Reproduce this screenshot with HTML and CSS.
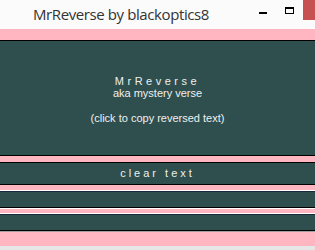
FILE: index.html
```html
<!doctype html>
<html lang="en">
<head>
<meta charset="UTF-8">
<title>MrReverse by blackoptics8</title>
<link rel="stylesheet" href="styles.css">
</head>
<body>
<div class="win">
	<div class="titlebar">
		<span class="title">MrReverse by blackoptics8</span>
		<span class="min"></span>
		<span class="max"></span>
		<span class="close"></span>
	</div>
	<div class="form">
		<div class="btn big">
			<div class="name">MrReverse</div>
			<div>aka mystery verse</div>
			<div class="blank"></div>
			<div>(click to copy reversed text)</div>
		</div>
		<div class="btn clear">clear text</div>
		<div class="field"></div>
		<div class="field last"></div>
	</div>
</div>
</body>
</html>
```
FILE: styles.css
```css
*{ margin:0px; padding:0px;}
body{
	width:315px;
	height:250px;
	overflow:hidden;
	background-color:#e6e6e6;
	font-family:"Liberation Sans", Arial, sans-serif;
}
.win{
	height:246px;
	display:flex;
	flex-direction:column;
	background-color:#ffb6c1;
}
.titlebar{
	position:relative;
	height:29px;
	background-color:#fbfbfb;
}
.title{
	position:absolute;
	left:33px;
	top:4px;
	font-family:"Open Sans", "Noto Sans", sans-serif;
	font-size:15px;
	line-height:20px;
	color:#333;
	letter-spacing:-0.4px;
}
.min{
	position:absolute;
	left:259px;
	top:12px;
	width:8px;
	height:2px;
	background-color:#000;
}
.max{
	position:absolute;
	left:285px;
	top:7px;
	width:7px;
	height:4px;
	border:1px solid #000;
	border-top-width:2px;
}
.close{
	position:absolute;
	left:303px;
	top:0px;
	width:12px;
	height:20px;
	background-color:#c75050;
}
.form{
	display:flex;
	flex-direction:column;
	padding-top:11px;
}
.btn{
	background-color:#2f4f4f;
	border-top:1px solid #000;
	border-bottom:1px solid #000;
	color:#eef0ee;
	text-align:center;
	font-size:11px;
}
.big{
	display:flex;
	flex-direction:column;
	justify-content:center;
	line-height:11px;
	padding-top:3px;
	box-sizing:border-box;
	height:116px;
}
.big .name{
	letter-spacing:3.5px;
	margin-bottom:1px;
}
.big .blank{
	height:14px;
}
.clear{
	margin-top:6px;
	height:21px;
	line-height:21px;
	letter-spacing:3px;
	font-size:11px;
}
.field{
	margin-top:6px;
	height:15px;
	background-color:#2f4f4f;
	border-top:1px solid #18293a;
	border-bottom:1px solid #000;
	box-shadow:0 -1px 0 #fff, 0 1px 0 #fff;
}
.field.last{
	box-shadow:0 -1px 0 #fff, 0 1px 0 #a0a0a0;
}
```
